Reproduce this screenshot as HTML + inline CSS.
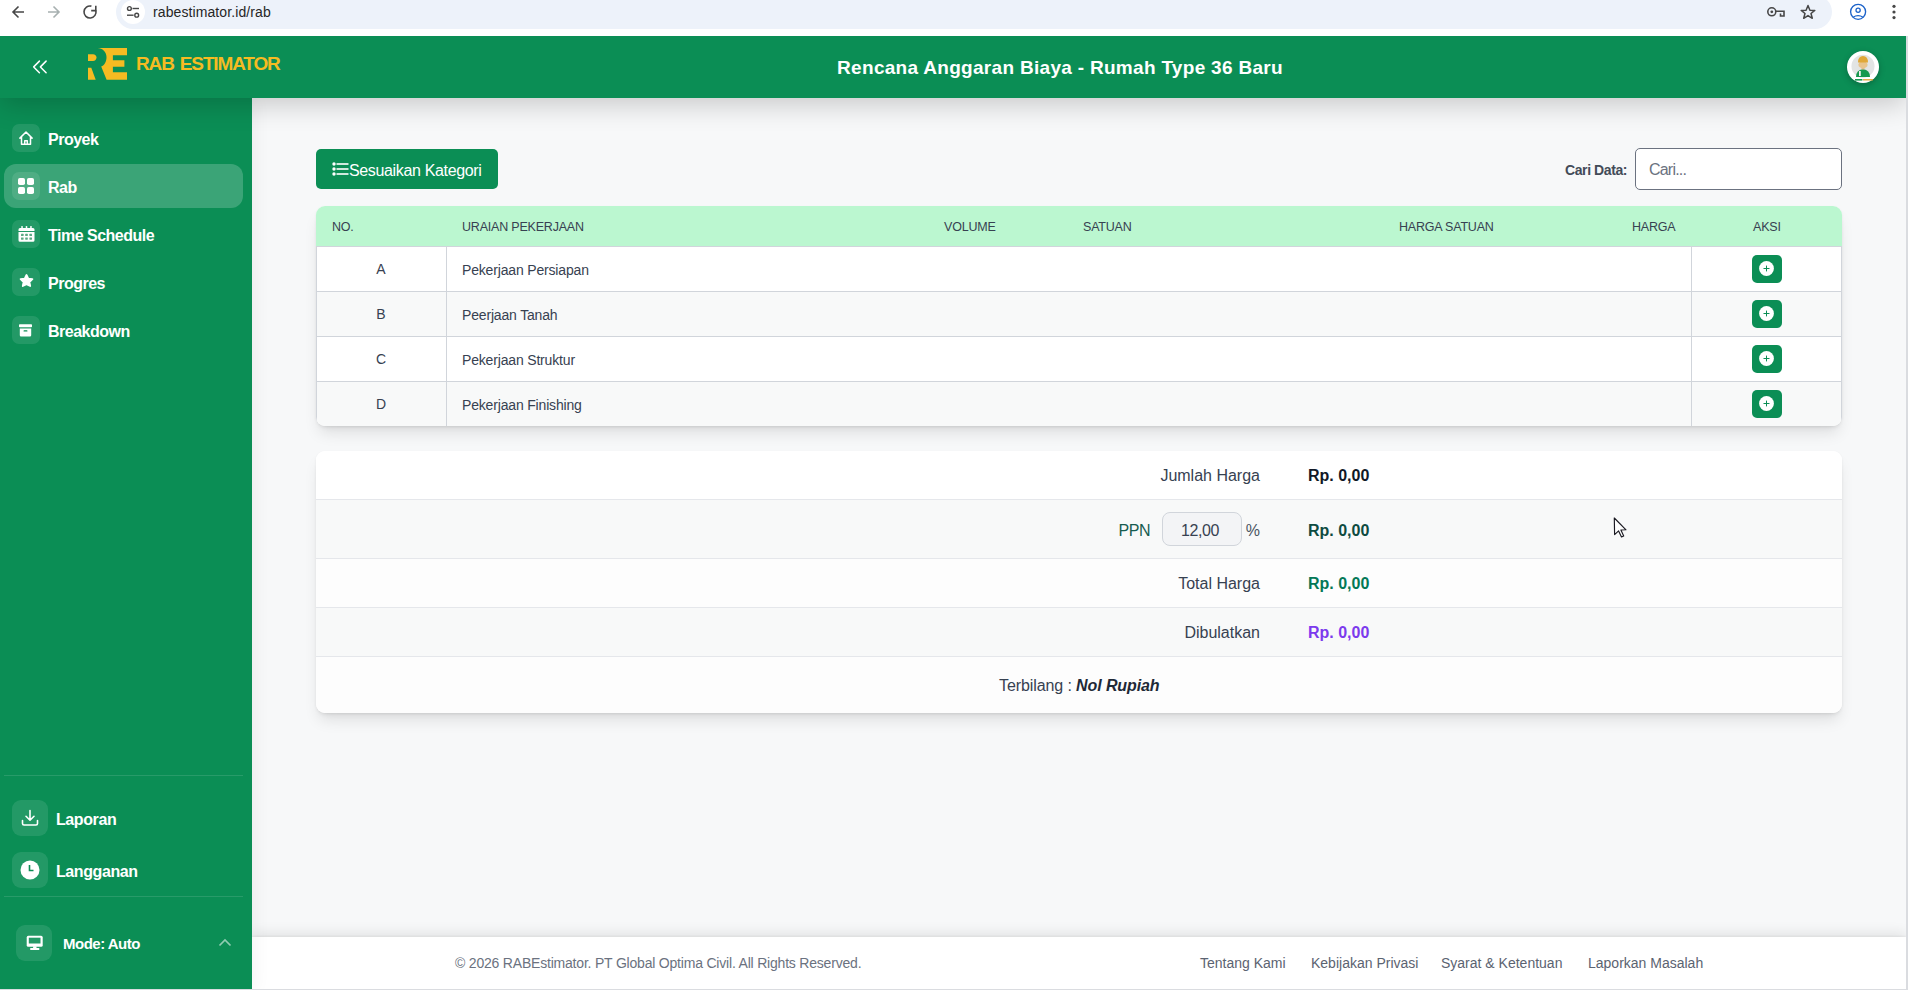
<!DOCTYPE html>
<html><head><meta charset="utf-8">
<style>
*{box-sizing:border-box;margin:0;padding:0}
html,body{width:1908px;height:990px;overflow:hidden;background:#f7f8f9;font-family:"Liberation Sans",sans-serif;}
body{position:relative}
.abs{position:absolute}
/* chrome */
#chrome{left:0;top:0;width:1908px;height:36px;background:#fff;z-index:6}
#pill{left:116px;top:-5.3px;width:1716px;height:34px;border-radius:17px;background:#edf2fa}
#tune{left:121px;top:0px;width:24px;height:24px;border-radius:12px;background:#fff}
#url{left:153px;top:4px;font-size:14px;color:#262626;letter-spacing:0.1px}
/* header */
#hdr{left:0;top:36px;width:1906px;height:62px;background:#0b8e55;box-shadow:0 6px 28px rgba(0,0,0,.2);z-index:3}
#title{left:0;width:2120px;top:21px;text-align:center;color:#fff;font-weight:bold;font-size:19px;letter-spacing:0.3px}
#brand{left:136px;top:16.5px;color:#f6bb22;font-weight:bold;font-size:19px;letter-spacing:-1.15px;word-spacing:2px}
#avatar{left:1847px;top:15px;width:32px;height:32px;border-radius:16px;background:#fff;box-shadow:0 2px 6px rgba(0,0,0,.25)}
/* sidebar */
#side{left:0;top:98px;width:252px;height:892px;background:#0b8e55;z-index:2;box-shadow:3px 0 16px rgba(0,0,0,.05)}
.nav{position:absolute;left:4px;width:239px;height:44px;border-radius:12px}
.nav.act{background:rgba(255,255,255,.2)}
.nav .ib{position:absolute;left:8px;top:8px;width:28px;height:28px;border-radius:7px;background:rgba(255,255,255,.1)}
.nav .ib svg{position:absolute;left:6px;top:6px}
.nav .tx{position:absolute;left:44px;top:15px;color:#fff;font-weight:bold;font-size:16px;letter-spacing:-0.5px}
.bnav{position:absolute;left:12px;width:231px;height:36px}
.bnav .ib{position:absolute;left:0;top:0;width:36px;height:36px;border-radius:9px;background:rgba(255,255,255,.1)}
.bnav .tx{position:absolute;left:44px;top:11px;color:#fff;font-weight:bold;font-size:16px;letter-spacing:-0.4px}
.sep{position:absolute;left:4px;width:239px;height:1px;background:rgba(255,255,255,.12)}
/* main */
#main{left:252px;top:98px;width:1654px;height:839px;background:#f7f8f9}
#rstrip{left:1906px;top:36px;width:2px;height:954px;background:#dadce0;z-index:5}
#bstrip{left:0;top:989px;width:1908px;height:1px;background:#dadce0;z-index:5}
#footer{left:252px;top:937px;width:1654px;height:53px;background:#fff;box-shadow:0 -4px 12px rgba(0,0,0,.09),0 -1px 2px rgba(0,0,0,.05);z-index:1}

#btn{left:316px;top:149px;width:182px;height:40px;background:#0b8e55;border-radius:5px;z-index:1}
#btn svg{position:absolute;left:16px;top:13px}
#btn .t{position:absolute;left:33px;top:12.5px;color:#fff;font-size:16px;letter-spacing:-0.35px}
#clab{left:1565px;top:161.5px;font-size:14px;font-weight:bold;color:#434b58;z-index:1;letter-spacing:-0.4px}
#cin{left:1635px;top:148px;width:207px;height:42px;background:#fff;border:1px solid #6b7280;border-radius:5px;z-index:1}
#cin .t{position:absolute;left:13px;top:12px;color:#6b7280;font-size:16px;letter-spacing:-0.8px}
#tbl{left:316px;top:206px;width:1526px;height:220px;background:#fff;border-radius:9px;box-shadow:0 10px 15px -3px rgba(0,0,0,.1),0 4px 6px -4px rgba(0,0,0,.1),0 1px 3px rgba(0,0,0,.05);overflow:hidden;z-index:1}
#thead{position:absolute;left:0;top:0;width:1526px;height:40px;background:#bbf7d0}
.th{position:absolute;top:14px;font-size:12.5px;color:#374151;letter-spacing:-0.2px}
.tr{position:absolute;left:0;width:1526px;height:45px;border-top:1px solid #d1d5db;border-left:1px solid #d1d5db;border-right:1px solid #d1d5db}
.tr .no{position:absolute;left:-1px;width:130px;top:14px;text-align:center;font-size:14px;color:#374151}
.tr .ds{position:absolute;left:145px;top:14.5px;font-size:14px;color:#374151;letter-spacing:-0.17px}
.tr .v1{position:absolute;left:129px;top:0;width:1px;height:45px;background:#d1d5db}
.tr .v2{position:absolute;left:1374px;top:0;width:1px;height:45px;background:#d1d5db}
.pb{position:absolute;left:1435px;top:8px;width:30px;height:28px;background:#0b8e55;border-radius:5px}
.pb svg{position:absolute;left:7px;top:6px}
#card{left:316px;top:451px;width:1526px;height:262px;background:#fff;border-radius:9px;box-shadow:0 10px 15px -3px rgba(0,0,0,.1),0 4px 6px -4px rgba(0,0,0,.1),0 1px 3px rgba(0,0,0,.05);overflow:hidden;z-index:1}
.sr{position:absolute;left:0;width:1526px}
.sr .l{position:absolute;right:582px;font-size:16px;color:#374151}
.sr .v{position:absolute;left:992px;font-size:16px;font-weight:bold}
#ppnin{position:absolute;left:846px;top:12px;width:80px;height:34px;background:#f3f4f6;border:1px solid #d1d5db;border-radius:8px;text-align:center;font-size:16px;color:#374151;padding-top:9px;padding-right:4px;letter-spacing:-0.4px}
#ftxt{left:455px;top:955px;font-size:14px;color:#6b7280;z-index:2;letter-spacing:-0.2px}
.fl{position:absolute;top:955px;font-size:14px;color:#5b6371;z-index:2}
</style></head><body>
<div id="chrome" class="abs">
  <div id="pill" class="abs"></div>
  <div id="tune" class="abs"></div>
  <div id="url" class="abs">rabestimator.id/rab</div>
  <svg class="abs" style="left:0;top:0" width="1908" height="36" viewBox="0 0 1908 36">
    <g fill="none" stroke="#474747" stroke-width="1.6" stroke-linecap="butt">
      <path d="M24,12 H13.5 M18.5,6.5 L13,12 L18.5,17.5"/>
      <path d="M91.4,6.15 A6,6 0 1 0 95.8,10.4"/>
      <path d="M95.8,5.8 V10.6 H91.2" stroke-linejoin="miter"/>
    </g>
    <path d="M48,12 H58.5 M53.5,6.5 L59,12 L53.5,17.5" fill="none" stroke="#a7b0b0" stroke-width="1.6"/>
    <g fill="none" stroke="#474747" stroke-width="1.4">
      <circle cx="129.4" cy="8.5" r="1.9"/><path d="M132.5,8.5 H139"/>
      <circle cx="136.7" cy="15.2" r="1.9"/><path d="M127,15.2 H133.6"/>
    </g>
    <g fill="none" stroke="#474747" stroke-width="1.6">
      <circle cx="1771.8" cy="11.8" r="4"/>
      <path d="M1775.8,11.3 H1784 V16 H1780.5 V13.5"/>
    </g>
    <circle cx="1771.8" cy="11.8" r="1.4" fill="#474747"/>
    <path d="M1808,5.5 L1809.9,10.2 L1814.8,10.4 L1811,13.5 L1812.3,18.3 L1808,15.6 L1803.7,18.3 L1805,13.5 L1801.2,10.4 L1806.1,10.2 Z" fill="none" stroke="#474747" stroke-width="1.5" stroke-linejoin="round"/>
    <circle cx="1858.1" cy="11.8" r="7.5" fill="none" stroke="#1b62c9" stroke-width="1.35"/>
    <circle cx="1858.1" cy="10.2" r="2.1" fill="none" stroke="#1b62c9" stroke-width="1.3"/>
    <path d="M1853,17.2 Q1858.1,14.2 1863.2,17.2" fill="none" stroke="#1b62c9" stroke-width="1.3"/>
    <g fill="#474747"><circle cx="1894" cy="6.3" r="1.6"/><circle cx="1894" cy="12" r="1.6"/><circle cx="1894" cy="17.6" r="1.6"/></g>
  </svg>
</div>
<div id="hdr" class="abs">
  <div id="title" class="abs">Rencana Anggaran Biaya - Rumah Type 36 Baru</div>
  <svg class="abs" style="left:84px;top:8px" width="48" height="40" viewBox="0 0 48 40">
    <path fill="#f6bb22" d="M13.7,4 L43,4 L43,11.3 L28.9,11.3 L28.9,16.2 L40.4,16.2 L40.4,22.8 L28.9,22.8 L28.9,28.3 L43,28.3 L43,35.8 L22.6,35.8 L17.2,22.6 C20.5,21.5 22.5,17.5 22.5,13 C22.5,8 18.5,4 13.7,4 Z"/>
    <path fill="#f6bb22" d="M4,10.3 L9,10.3 C11,10.3 12.5,11.8 12.5,13.6 C12.5,15.5 11,17 9,17 L4,17 Z"/>
    <path fill="#f6bb22" d="M4,23.8 L7.3,23.8 L11.7,35.8 L4,35.8 Z"/>
  </svg>
  <div id="brand" class="abs">RAB ESTIMATOR</div>
  <svg class="abs" style="left:24px;top:16px" width="32" height="30" viewBox="24 52 32 30"><path d="M39.4,61.1 L33.7,66.9 L39.4,72.8 M46.1,61.1 L40.4,66.9 L46.1,72.8" fill="none" stroke="#fff" stroke-width="1.5" stroke-linecap="round" stroke-linejoin="round"/></svg>
  <div id="avatar" class="abs"><svg width="32" height="32" viewBox="1847 51 32 32" style="position:absolute;left:0;top:0">
    <circle cx="1863" cy="66.2" r="11.5" fill="#e2e4e4"/>
    <path d="M1856,77 Q1856,70 1863,69 Q1870,70 1870,77 Z" fill="#17994f"/>
    <rect x="1861.5" y="66.5" width="3" height="3" fill="#e0b888"/>
    <ellipse cx="1863" cy="64.8" rx="4.6" ry="3.6" fill="#e8c48c"/>
    <path d="M1858,62.6 Q1858,56 1863,56 Q1868,56 1868,62.6 Z" fill="#e0a838"/>
    <rect x="1859" y="71" width="1.8" height="5" fill="#f0f0f0"/>
    <path d="M1855,79.8 H1862.4" stroke="#17994f" stroke-width="1.6"/>
    <path d="M1863,79.8 H1873" stroke="#e0a838" stroke-width="1.4"/>
  </svg></div>
</div>
<div id="side" class="abs">
  <div class="nav" style="top:18px"><div class="ib"><svg width="16" height="16" viewBox="0 0 16 16" style="left:6.3px;top:6px"><path d="M1.9,8.1 L8,2 L14.1,8.1 M3.5,6.7 V14.2 H12.5 V6.7 M6.7,14.2 V10.7 H9.3 V14.2" fill="none" stroke="#fff" stroke-width="1.5" stroke-linejoin="round" stroke-linecap="round"/></svg></div><div class="tx">Proyek</div></div>
  <div class="nav act" style="top:66px"><div class="ib" style="background:rgba(255,255,255,.1)"><svg width="16" height="16" viewBox="0 0 16 16"><rect x="0" y="0" width="7" height="7" rx="1.8" fill="#fff"/><rect x="9" y="0" width="7" height="7" rx="1.8" fill="#fff"/><rect x="0" y="9" width="7" height="7" rx="1.8" fill="#fff"/><rect x="9" y="9" width="7" height="7" rx="1.8" fill="#fff"/></svg></div><div class="tx">Rab</div></div>
  <div class="nav" style="top:114px"><div class="ib"><svg width="17" height="16" viewBox="0 0 17 16" style="left:5.7px;top:6px"><g fill="#fff"><rect x="3.3" y="0" width="1.5" height="3.5" rx="0.6"/><rect x="7.75" y="0" width="1.5" height="3.5" rx="0.6"/><rect x="12.2" y="0" width="1.5" height="3.5" rx="0.6"/><path d="M2,1.9 H15 a1.5,1.5 0 0 1 1.5,1.5 V5 H0.5 V3.4 a1.5,1.5 0 0 1 1.5,-1.5 Z"/><path d="M0.5,6.1 H16.5 V14.3 a1.5,1.5 0 0 1 -1.5,1.5 H2 a1.5,1.5 0 0 1 -1.5,-1.5 Z"/></g><g fill="#5aa983"><rect x="3" y="7.8" width="2.6" height="2.3" rx="0.4"/><rect x="7.2" y="7.8" width="2.6" height="2.3" rx="0.4"/><rect x="11.4" y="7.8" width="2.6" height="2.3" rx="0.4"/><rect x="3" y="11.4" width="2.6" height="2.3" rx="0.4"/><rect x="7.2" y="11.4" width="2.6" height="2.3" rx="0.4"/><rect x="11.4" y="11.4" width="2.6" height="2.3" rx="0.4"/></g></svg></div><div class="tx">Time Schedule</div></div>
  <div class="nav" style="top:162px"><div class="ib"><svg width="15" height="14" viewBox="0 0 15 14" style="left:6.6px;top:6.2px"><path fill="#fff" stroke="#fff" stroke-width="1.8" stroke-linejoin="round" d="M7.5,1 L9.3,4.6 L13.4,5.1 L10.4,8 L11.2,12 L7.5,10.1 L3.8,12 L4.6,8 L1.6,5.1 L5.7,4.6 Z"/></svg></div><div class="tx">Progres</div></div>
  <div class="nav" style="top:210px"><div class="ib"><svg width="14" height="13" viewBox="0 0 14 13" style="left:7.4px;top:7.8px"><rect x="0" y="0.3" width="13" height="3" rx="0.8" fill="#fff"/><path fill="#fff" d="M0.8,4.6 H12.2 V11.2 a1.2,1.2 0 0 1 -1.2,1.2 H2 a1.2,1.2 0 0 1 -1.2,-1.2 Z"/><rect x="4.5" y="6.2" width="4" height="1.4" rx="0.7" fill="#0c8c54"/></svg></div><div class="tx">Breakdown</div></div>
  <div class="sep" style="top:677px"></div>
  <div class="bnav" style="top:702px"><div class="ib"><svg width="18" height="18" viewBox="0 0 18 18" style="position:absolute;left:9px;top:9px"><path d="M9,1.5 V11 M5,7.3 L9,11.2 L13,7.3 M1.5,11.5 V14.5 a1.5,1.5 0 0 0 1.5,1.5 H15 a1.5,1.5 0 0 0 1.5,-1.5 V11.5" fill="none" stroke="#fff" stroke-width="1.6" stroke-linecap="round" stroke-linejoin="round"/></svg></div><div class="tx">Laporan</div></div>
  <div class="bnav" style="top:754px"><div class="ib"><svg width="20" height="20" viewBox="0 0 20 20" style="position:absolute;left:8px;top:8px"><circle cx="10" cy="10" r="9.5" fill="#fff"/><path d="M9.5,5 V10.5 H13.5" fill="none" stroke="#0c8c54" stroke-width="1.6"/></svg></div><div class="tx">Langganan</div></div>
  <div class="sep" style="top:798px"></div>
  <div class="bnav" style="left:16px;top:827px"><div class="ib"><svg width="18" height="16" viewBox="0 0 18 16" style="position:absolute;left:9.5px;top:10px"><rect x="0.7" y="0.8" width="16" height="11" rx="1.6" fill="#fff"/><rect x="2.8" y="2.7" width="11.7" height="5.8" fill="#239966"/><rect x="7.1" y="11.3" width="3.4" height="2" fill="#fff"/><rect x="4.2" y="13" width="9.1" height="1.9" rx="0.5" fill="#fff"/></svg></div><div class="tx" style="left:47px;top:10px;font-size:15px;letter-spacing:-0.5px">Mode: Auto</div>
  <svg width="14" height="9" viewBox="0 0 14 9" style="position:absolute;left:202px;top:13px"><path d="M1.5,7.5 L7,2 L12.5,7.5" fill="none" stroke="rgba(255,255,255,.55)" stroke-width="1.7"/></svg></div>
</div>
<div id="main" class="abs"></div>
<div id="btn" class="abs"><svg width="17" height="14" viewBox="0 0 17 14"><g fill="#fff"><circle cx="2" cy="2" r="1.7"/><circle cx="2" cy="7" r="1.7"/><circle cx="2" cy="12" r="1.7"/><rect x="4.5" y="1.2" width="12" height="1.6"/><rect x="4.5" y="6.2" width="12" height="1.6"/><rect x="4.5" y="11.2" width="12" height="1.6"/></g></svg><div class="t">Sesuaikan Kategori</div></div>
<div id="clab" class="abs">Cari Data:</div>
<div id="cin" class="abs"><div class="t">Cari...</div></div>
<div id="tbl" class="abs">
<div id="thead"><div class="th" style="left:16px">NO.</div><div class="th" style="left:146px">URAIAN PEKERJAAN</div><div class="th" style="left:628px">VOLUME</div><div class="th" style="left:767px">SATUAN</div><div class="th" style="left:1083px">HARGA SATUAN</div><div class="th" style="left:1316px">HARGA</div><div class="th" style="left:1437px">AKSI</div></div>
<div class="tr" style="top:40px;background:#fff"><div class="v1"></div><div class="v2"></div><div class="no">A</div><div class="ds">Pekerjaan Persiapan</div><div class="pb"><svg width="16" height="16" viewBox="0 0 16 16"><circle cx="7.5" cy="7.5" r="7.4" fill="#fff"/><path d="M7.5,4.6 V10.4 M4.5,7.5 H10.5" stroke="#0b8e55" stroke-width="1"/></svg></div></div>
<div class="tr" style="top:85px;background:#f8f9f9"><div class="v1"></div><div class="v2"></div><div class="no">B</div><div class="ds">Peerjaan Tanah</div><div class="pb"><svg width="16" height="16" viewBox="0 0 16 16"><circle cx="7.5" cy="7.5" r="7.4" fill="#fff"/><path d="M7.5,4.6 V10.4 M4.5,7.5 H10.5" stroke="#0b8e55" stroke-width="1"/></svg></div></div>
<div class="tr" style="top:130px;background:#fff"><div class="v1"></div><div class="v2"></div><div class="no">C</div><div class="ds">Pekerjaan Struktur</div><div class="pb"><svg width="16" height="16" viewBox="0 0 16 16"><circle cx="7.5" cy="7.5" r="7.4" fill="#fff"/><path d="M7.5,4.6 V10.4 M4.5,7.5 H10.5" stroke="#0b8e55" stroke-width="1"/></svg></div></div>
<div class="tr" style="top:175px;background:#f8f9f9"><div class="v1"></div><div class="v2"></div><div class="no">D</div><div class="ds">Pekerjaan Finishing</div><div class="pb"><svg width="16" height="16" viewBox="0 0 16 16"><circle cx="7.5" cy="7.5" r="7.4" fill="#fff"/><path d="M7.5,4.6 V10.4 M4.5,7.5 H10.5" stroke="#0b8e55" stroke-width="1"/></svg></div></div>
</div>
<div id="card" class="abs">
<div class="sr" style="top:0;height:48px;background:#fff"><div class="l" style="top:16px">Jumlah Harga</div><div class="v" style="top:16px;color:#111827">Rp. 0,00</div></div>
<div class="sr" style="top:48px;height:59px;background:#f8f9f9;border-top:1px solid #e5e7eb"><div class="l" style="top:22px;right:692px;color:#175c50;letter-spacing:-0.5px">PPN</div><div id="ppnin">12,00</div><div class="l" style="top:22px;color:#4b5563">%</div><div class="v" style="top:22px;color:#0e4b41">Rp. 0,00</div></div>
<div class="sr" style="top:107px;height:49px;background:#fdfdfd;border-top:1px solid #e5e7eb"><div class="l" style="top:16px">Total Harga</div><div class="v" style="top:16px;color:#047857">Rp. 0,00</div></div>
<div class="sr" style="top:156px;height:49px;background:#f8f9f9;border-top:1px solid #e5e7eb"><div class="l" style="top:16px">Dibulatkan</div><div class="v" style="top:16px;color:#7c3aed">Rp. 0,00</div></div>
<div class="sr" style="top:205px;height:57px;background:#fdfdfd;border-top:1px solid #e5e7eb"><div style="position:absolute;left:683px;top:20px;font-size:16px;color:#374151;letter-spacing:-0.1px">Terbilang : <i style="font-weight:bold;color:#1f2937">Nol Rupiah</i></div></div>
</div>
<div id="footer" class="abs"></div>
<div id="ftxt" class="abs">&copy; 2026 RABEstimator. PT Global Optima Civil. All Rights Reserved.</div>
<div class="fl" style="left:1200px">Tentang Kami</div><div class="fl" style="left:1311px">Kebijakan Privasi</div><div class="fl" style="left:1441px">Syarat &amp; Ketentuan</div><div class="fl" style="left:1588px">Laporkan Masalah</div>
<div id="rstrip" class="abs"></div>
<div id="bstrip" class="abs"></div>
<svg class="abs" style="left:1608px;top:512px;z-index:9" width="24" height="30" viewBox="1608 512 24 30"><path d="M1614.3,518 L1614.6,534.6 L1618.6,530.9 L1621.5,536.9 L1623.7,535.9 L1620.9,530 L1626,529.8 Z" fill="#fff" stroke="#1a1a22" stroke-width="1.15" stroke-linejoin="round"/></svg>
</body></html>
